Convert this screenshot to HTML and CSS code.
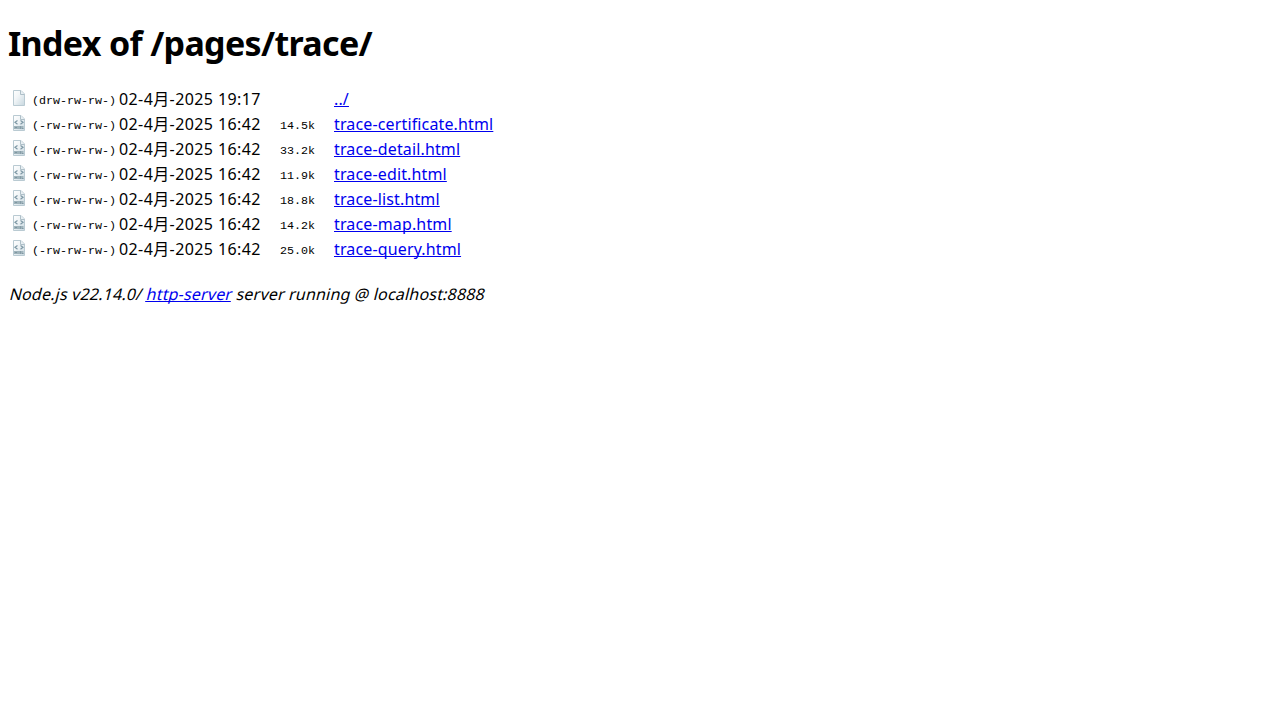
FILE: index.html
```
<!DOCTYPE html>
<html lang="en">
<head>
<meta charset="utf-8">
<title>Index of /pages/trace/</title>
<link rel="stylesheet" href="styles.css">
</head>
<body>
<svg class="defs" width="0" height="0" aria-hidden="true">
  <defs>
    <linearGradient id="paper" x1="0" y1="0" x2="1" y2="1"><stop offset="0" stop-color="#fff"/><stop offset=".4" stop-color="#f1f5f7"/><stop offset="1" stop-color="#c7d7df"/></linearGradient>
    <symbol id="blank" viewBox="0 0 16 16">
      <path d="M1.500.5h7.500l3.500 3.500v11.500h-11z" fill="url(#paper)" stroke="#b9cad2"/>
      <path d="M8.500.5v4h4" fill="#e9f0f3" stroke="#aebfc8"/>
    </symbol>
    <symbol id="html" viewBox="0 0 16 16">
      <use href="#blank"/>
      <path d="M5.500 5.500L3 7.300L5.500 9.200M8.500 5.500l2.500 1.800l-2.500 1.900" fill="none" stroke="#7e98a5" stroke-width="1.200"/>
      <path d="M2 11h10v3H2z" fill="#b9c9d0"/>
      <path d="M3 11v3M5 11v3M3 12.500h2M7 14v-3M8.500 14v-3M10 14v-3M10 13.500h1.500" stroke="#718a96" stroke-width=".7"/>
    </symbol>
  </defs>
</svg>
<h1>Index of /pages/trace/</h1>
<table>
<tr><td class="icon"><svg><use href="#blank"/></svg></td><td class="perms"><code>(drw-rw-rw-)</code></td><td class="date">02-4月-2025 19:17</td><td class="size"></td><td class="name"><a href="#">../</a></td></tr>
<tr><td class="icon"><svg><use href="#html"/></svg></td><td class="perms"><code>(-rw-rw-rw-)</code></td><td class="date">02-4月-2025 16:42</td><td class="size"><code>14.5k</code></td><td class="name"><a href="#">trace-certificate.html</a></td></tr>
<tr><td class="icon"><svg><use href="#html"/></svg></td><td class="perms"><code>(-rw-rw-rw-)</code></td><td class="date">02-4月-2025 16:42</td><td class="size"><code>33.2k</code></td><td class="name"><a href="#">trace-detail.html</a></td></tr>
<tr><td class="icon"><svg><use href="#html"/></svg></td><td class="perms"><code>(-rw-rw-rw-)</code></td><td class="date">02-4月-2025 16:42</td><td class="size"><code>11.9k</code></td><td class="name"><a href="#">trace-edit.html</a></td></tr>
<tr><td class="icon"><svg><use href="#html"/></svg></td><td class="perms"><code>(-rw-rw-rw-)</code></td><td class="date">02-4月-2025 16:42</td><td class="size"><code>18.8k</code></td><td class="name"><a href="#">trace-list.html</a></td></tr>
<tr><td class="icon"><svg><use href="#html"/></svg></td><td class="perms"><code>(-rw-rw-rw-)</code></td><td class="date">02-4月-2025 16:42</td><td class="size"><code>14.2k</code></td><td class="name"><a href="#">trace-map.html</a></td></tr>
<tr><td class="icon"><svg><use href="#html"/></svg></td><td class="perms"><code>(-rw-rw-rw-)</code></td><td class="date">02-4月-2025 16:42</td><td class="size"><code>25.0k</code></td><td class="name"><a href="#">trace-query.html</a></td></tr>
</table>
<address>Node.js v22.14.0/ <a href="#">http-server</a> server running @ localhost:8888</address>
</body>
</html>
```
FILE: styles.css
```
body {
  margin: 0 8px;
  padding-top: 21px;
  background: #fff;
  color: #000;
  font: 16px/25px "Noto Sans", "Noto Sans CJK SC", sans-serif;
}
.defs { display: block; height: 0; }
h1 {
  margin: 0 0 22px;
  font-size: 34px;
  line-height: 44px;
  font-weight: 700;
  letter-spacing: -0.67px;
}
table {
  table-layout: fixed;
  width: 620px;
  border-collapse: collapse;
}
td {
  height: 25px;
  padding: 0;
  white-space: nowrap;
  line-height: 24px;
  vertical-align: top;
}
.icon { width: 24px; }
.icon svg {
  display: block;
  width: 16px;
  height: 16px;
  margin: 3px 0 0 4px;
}
.perms { width: 87px; }
.date { width: 142px; letter-spacing: 0.4px; }
.size { width: 54px; padding-right: 19px; text-align: right; }
.name { letter-spacing: 0.14px; }
code {
  display: block;
  padding-top: 3px;
  font: 11.67px/22px "Liberation Mono", monospace;
}
a { color: #00e; text-decoration: underline #00e 1px; text-underline-offset: 1px; text-decoration-skip-ink: none; }
address {
  margin-top: 20px;
  padding-left: 2px;
  font-style: normal;
  letter-spacing: 0.19px;
  transform: skewX(-14deg);
}
```
